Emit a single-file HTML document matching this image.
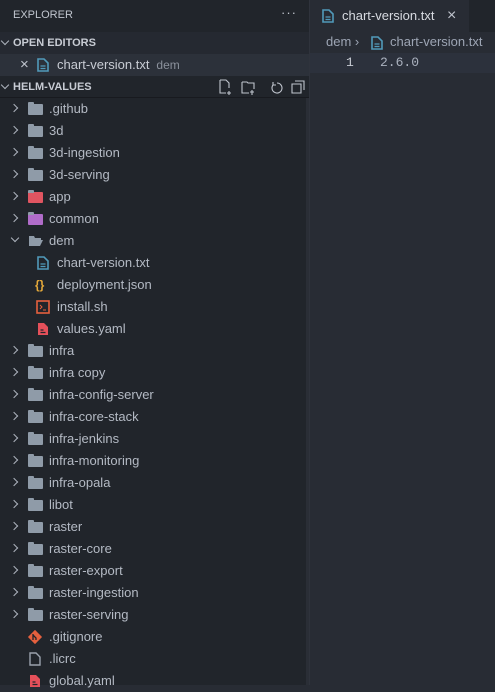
<!DOCTYPE html><html><head><style>
body{margin:0;width:495px;height:685px;overflow:hidden;background:#282c34;font-family:"Liberation Sans",sans-serif;font-size:13px;color:#b4bac4;position:relative}
#sb{position:absolute;left:0;top:0;width:309px;height:685px;background:#21252b;border-right:1px solid #2f333c}
.r{position:absolute;left:0;width:309px;height:22px;line-height:22px;white-space:nowrap}
.hd{font-weight:bold;font-size:11px;color:#c8ccd4}
.chev{position:absolute;top:7px;width:5px;height:5px;border-right:1.3px solid #aeb4be;border-bottom:1.3px solid #aeb4be}
.cr{left:11px;transform:rotate(-45deg)}
.cd{left:12px;top:5px;transform:rotate(45deg)}
.hd .cd{left:2px;top:6px}
.ic{position:absolute;top:5px}
.lb{position:absolute;left:49px}
.fold{position:absolute;left:28px;top:6px;width:15px;height:11px;background:#8f9ba8;border-radius:1px}
.fold:before{content:"";position:absolute;left:0;top:-2px;width:6px;height:3px;background:#8f9ba8;border-radius:1px 1px 0 0}
</style></head><body>
<div id="sb">
<div class="r" style="top:3px;height:24px;line-height:24px;left:13px;font-size:11px;color:#c0c5ce">EXPLORER</div>
<div style="position:absolute;left:281px;top:5px;font-size:13px;color:#c0c5ce;letter-spacing:1px">···</div>
<div class="r hd" style="top:32px;background:#252931"><span class="chev cd"></span><span style="position:absolute;left:13px">OPEN EDITORS</span></div>
<div class="r" style="top:54px;background:#2c313a"><span style="position:absolute;left:20px;color:#c0c5ce;font-size:15px">×</span>
<svg class="ic" style="left:37px;top:4px" width="12" height="14" viewBox="0 0 12 14"><path d="M1 1h6l4 4v8H1z" fill="none" stroke="#519aba" stroke-width="1.6"/><path d="M3.5 8h5M3.5 10.5h5" stroke="#519aba" stroke-width="1.3"/></svg>
<span style="position:absolute;left:57px;color:#c8ccd4">chart-version.txt <span style="font-size:12px;color:#8b919c">&nbsp;dem</span></span></div>
<div class="r hd" style="top:76px;border-bottom:1px solid #181a1f;height:21px"><span class="chev cd"></span><span style="position:absolute;left:13px">HELM-VALUES</span>
<svg style="position:absolute;left:217px;top:3px" width="90" height="16" viewBox="0 0 90 16" fill="none" stroke="#c0c5ce" stroke-width="1.1"><path d="M3 1h6l3 3v5M3 1v13h6M12 12v4M10 14h4"/><path d="M25 3h5l1 1h6v6M25 3v11h7M35 11v5M33 13h4"/><path d="M60 4a5 5 0 1 1-4 2M56 3v3h3"/><path d="M75 5h9v9h-9zM78 2h9v9"/></svg></div>
<div id="tree"></div>
<div style="position:absolute;left:306px;top:98px;width:3px;height:587px;background:#2a2e36"></div>
</div>
<div style="position:absolute;left:310px;top:0;width:185px;height:32px;background:#21252b"></div>
<div style="position:absolute;left:310px;top:0;width:159px;height:32px;background:#282c34;line-height:32px">
<svg style="position:absolute;left:12px;top:9px" width="12" height="14" viewBox="0 0 12 14"><path d="M1 1h6l4 4v8H1z" fill="none" stroke="#519aba" stroke-width="1.6"/><path d="M3.5 8h5M3.5 10.5h5" stroke="#519aba" stroke-width="1.3"/></svg>
<span style="position:absolute;left:32px;color:#d7dae0">chart-version.txt</span><span style="position:absolute;left:137px;font-size:16px;color:#c0c5ce">×</span></div>
<div style="position:absolute;left:326px;top:34px;color:#9da5b4">dem &#x203A;</div>
<svg style="position:absolute;left:371px;top:36px" width="12" height="14" viewBox="0 0 12 14"><path d="M1 1h6l4 4v8H1z" fill="none" stroke="#519aba" stroke-width="1.6"/><path d="M3.5 8h5M3.5 10.5h5" stroke="#519aba" stroke-width="1.3"/></svg>
<div style="position:absolute;left:390px;top:34px;color:#9da5b4">chart-version.txt</div>
<div style="position:absolute;left:310px;top:53px;width:185px;height:20px;background:#2c313c"></div>
<div style="position:absolute;left:346px;top:55px;color:#c8ccd4;font-family:'Liberation Mono',monospace;font-size:13px">1</div>
<div style="position:absolute;left:380px;top:55px;color:#abb2bf;font-family:'Liberation Mono',monospace;font-size:13px">2.6.0</div>
<script>
var items=[
["f",".github","#8f9ba8"],["f","3d"],["f","3d-ingestion"],["f","3d-serving"],["f","app","#e05561"],["f","common","#b06cc9"],["o","dem"],
["t","chart-version.txt"],["j","deployment.json"],["s","install.sh"],["y","values.yaml"],
["f","infra"],["f","infra copy"],["f","infra-config-server"],["f","infra-core-stack"],["f","infra-jenkins"],["f","infra-monitoring"],["f","infra-opala"],["f","libot"],["f","raster"],["f","raster-core"],["f","raster-export"],["f","raster-ingestion"],["f","raster-serving"],
["g",".gitignore"],["p",".licrc"],["Y","global.yaml"]];
var h="";items.forEach(function(it,i){var top=98+i*22,k=it[0],s='<div class="r" style="top:'+top+'px">';
if(k=="f"){s+='<span class="chev cr"></span><span class="fold" style="'+(it[2]?'background:'+it[2]:'')+'"></span><span class="lb">'+it[1]+'</span>';}
else if(k=="o"){s+='<span class="chev cd"></span><svg class="ic" style="left:28px;top:5px" width="16" height="12"><path d="M1 1h5l1 2h6v2H4L1 11z M4 5h11l-3 6H1z" fill="#8f9ba8"/></svg><span class="lb">'+it[1]+'</span>';}
else{var ic="",L=36;
if(k=="t")ic='<svg class="ic" style="left:37px;top:4px" width="12" height="14"><path d="M1 1h6l4 4v8H1z" fill="none" stroke="#519aba" stroke-width="1.6"/><path d="M3.5 8h5M3.5 10.5h5" stroke="#519aba" stroke-width="1.3"/></svg>';
if(k=="j")ic='<span class="ic" style="left:35px;top:0;color:#e5a93a;font-weight:bold;font-size:12px">{}</span>';
if(k=="s")ic='<svg class="ic" style="left:36px;top:4px" width="14" height="14"><rect x="1" y="1" width="12" height="12" fill="none" stroke="#e5603e" stroke-width="1.6"/><path d="M4 5l2 2-2 2M7 10h3" stroke="#e5603e" fill="none"/></svg>';
if(k=="y"||k=="Y")ic='<svg class="ic" style="left:'+(k=="Y"?29:37)+'px;top:4px" width="12" height="14"><path d="M1 1h6l4 4v8H1z" fill="#e5505a"/><path d="M3.5 8h3M3.5 10.5h5" stroke="#21252b" stroke-width="1.3"/></svg>';
if(k=="g")ic='<svg class="ic" style="left:27px;top:3px" width="16" height="16"><rect x="3" y="3" width="10" height="10" transform="rotate(45 8 8)" fill="#e5603e"/><path d="M6 5v6M6 6l3 3v2" stroke="#21252b" stroke-width="1.3" fill="none"/></svg>';
if(k=="p")ic='<svg class="ic" style="left:29px;top:4px" width="12" height="14"><path d="M1 1h6l4 4v8H1z" fill="none" stroke="#9aa2ad" stroke-width="1.4"/></svg>';
if(k=="g"||k=="p"||k=="Y"){L=49;}else L=57;
s+=ic+'<span style="position:absolute;left:'+L+'px">'+it[1]+'</span>';}
h+=s+'</div>';});
document.getElementById("tree").innerHTML=h;
</script>
</body></html>
